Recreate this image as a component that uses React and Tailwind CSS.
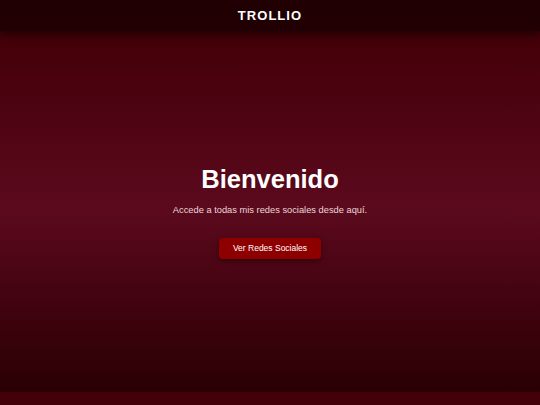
import React from "react";

const App = () => {
    return (
        <div className="min-h-screen flex flex-col bg-[#430008] font-['Liberation_Sans',Arial,sans-serif]">
            {/* Header */}
            <header className="h-[31px] flex items-center justify-center bg-[#210003] shadow-[0_3px_8px_rgba(0,0,0,0.6)] relative z-10">
                <h1 className="text-white text-[13px] font-bold tracking-[0.08em]">TROLLIO</h1>
            </header>

            {/* Hero */}
            <main className="h-[361px] flex flex-col items-center justify-center bg-gradient-to-b from-[#430008] via-[#5b0a1d] to-[#2a0004] pt-[3px]">
                <h2 className="text-white text-[25.5px] font-bold leading-none">Bienvenido</h2>
                <p className="text-[#ecd6d9] text-[9.3px] mt-[11px]">Accede a todas mis redes sociales desde aquí.</p>
                <button className="mt-[20px] w-[102px] h-[21px] rounded-[4px] bg-[#8e0000] text-white text-[8.5px] shadow-[0_2px_6px_rgba(0,0,0,0.35)]">
                    Ver Redes Sociales
                </button>
            </main>
        </div>
    );
};

export default App;
